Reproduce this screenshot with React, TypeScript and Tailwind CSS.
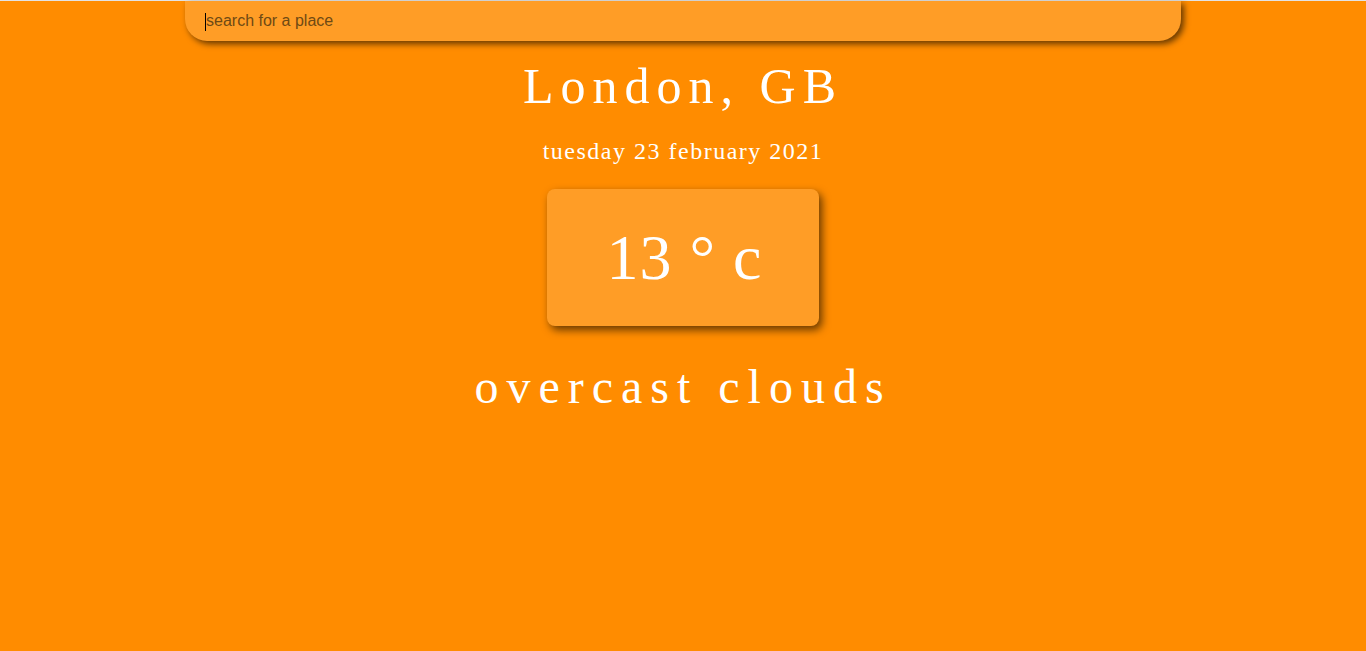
import React from "react";

const serif = { fontFamily: '"Liberation Serif", "Times New Roman", serif' };

export default function App() {
  return (
    <div className="min-h-[651px] w-full bg-[#ff8c00] flex flex-col items-center text-white" style={serif}>
      <div className="h-px w-full bg-[#e3e3e3]" />
      {/* search bar, caret drawn since headless focus doesn't paint one */}
      <div className="w-[996px] h-[40px] bg-[#ff9d26] rounded-b-[22px] shadow-[3px_3px_6px_rgba(0,0,0,0.6)] flex items-center pl-[20px]">
        <span className="w-px h-[18px] bg-black shrink-0 mt-[1px]" />
        <input
          placeholder="search for a place"
          className="w-full h-full bg-transparent outline-none text-[16px] text-[#3a2608] placeholder:text-[#6f4a14]"
          style={{ fontFamily: '"Liberation Sans", Arial, sans-serif' }}
        />
      </div>
      <h1 className="mt-[20px] text-[50px] leading-[50px] tracking-[7px]">London, GB</h1>
      <div className="mt-[28px] text-[24px] leading-[24px] tracking-[1.5px]">tuesday 23 february 2021</div>
      <div className="mt-[26px] w-[272px] h-[137px] rounded-[8px] bg-[#ff9d26] shadow-[3px_4px_8px_rgba(0,0,0,0.6)] flex items-center justify-center">
        <span className="text-[64px] leading-[64px] tracking-[1px] pl-[3px]">13 ° c</span>
      </div>
      <div className="mt-[37px] text-[48px] leading-[48px] tracking-[8px]">overcast clouds</div>
    </div>
  );
}
